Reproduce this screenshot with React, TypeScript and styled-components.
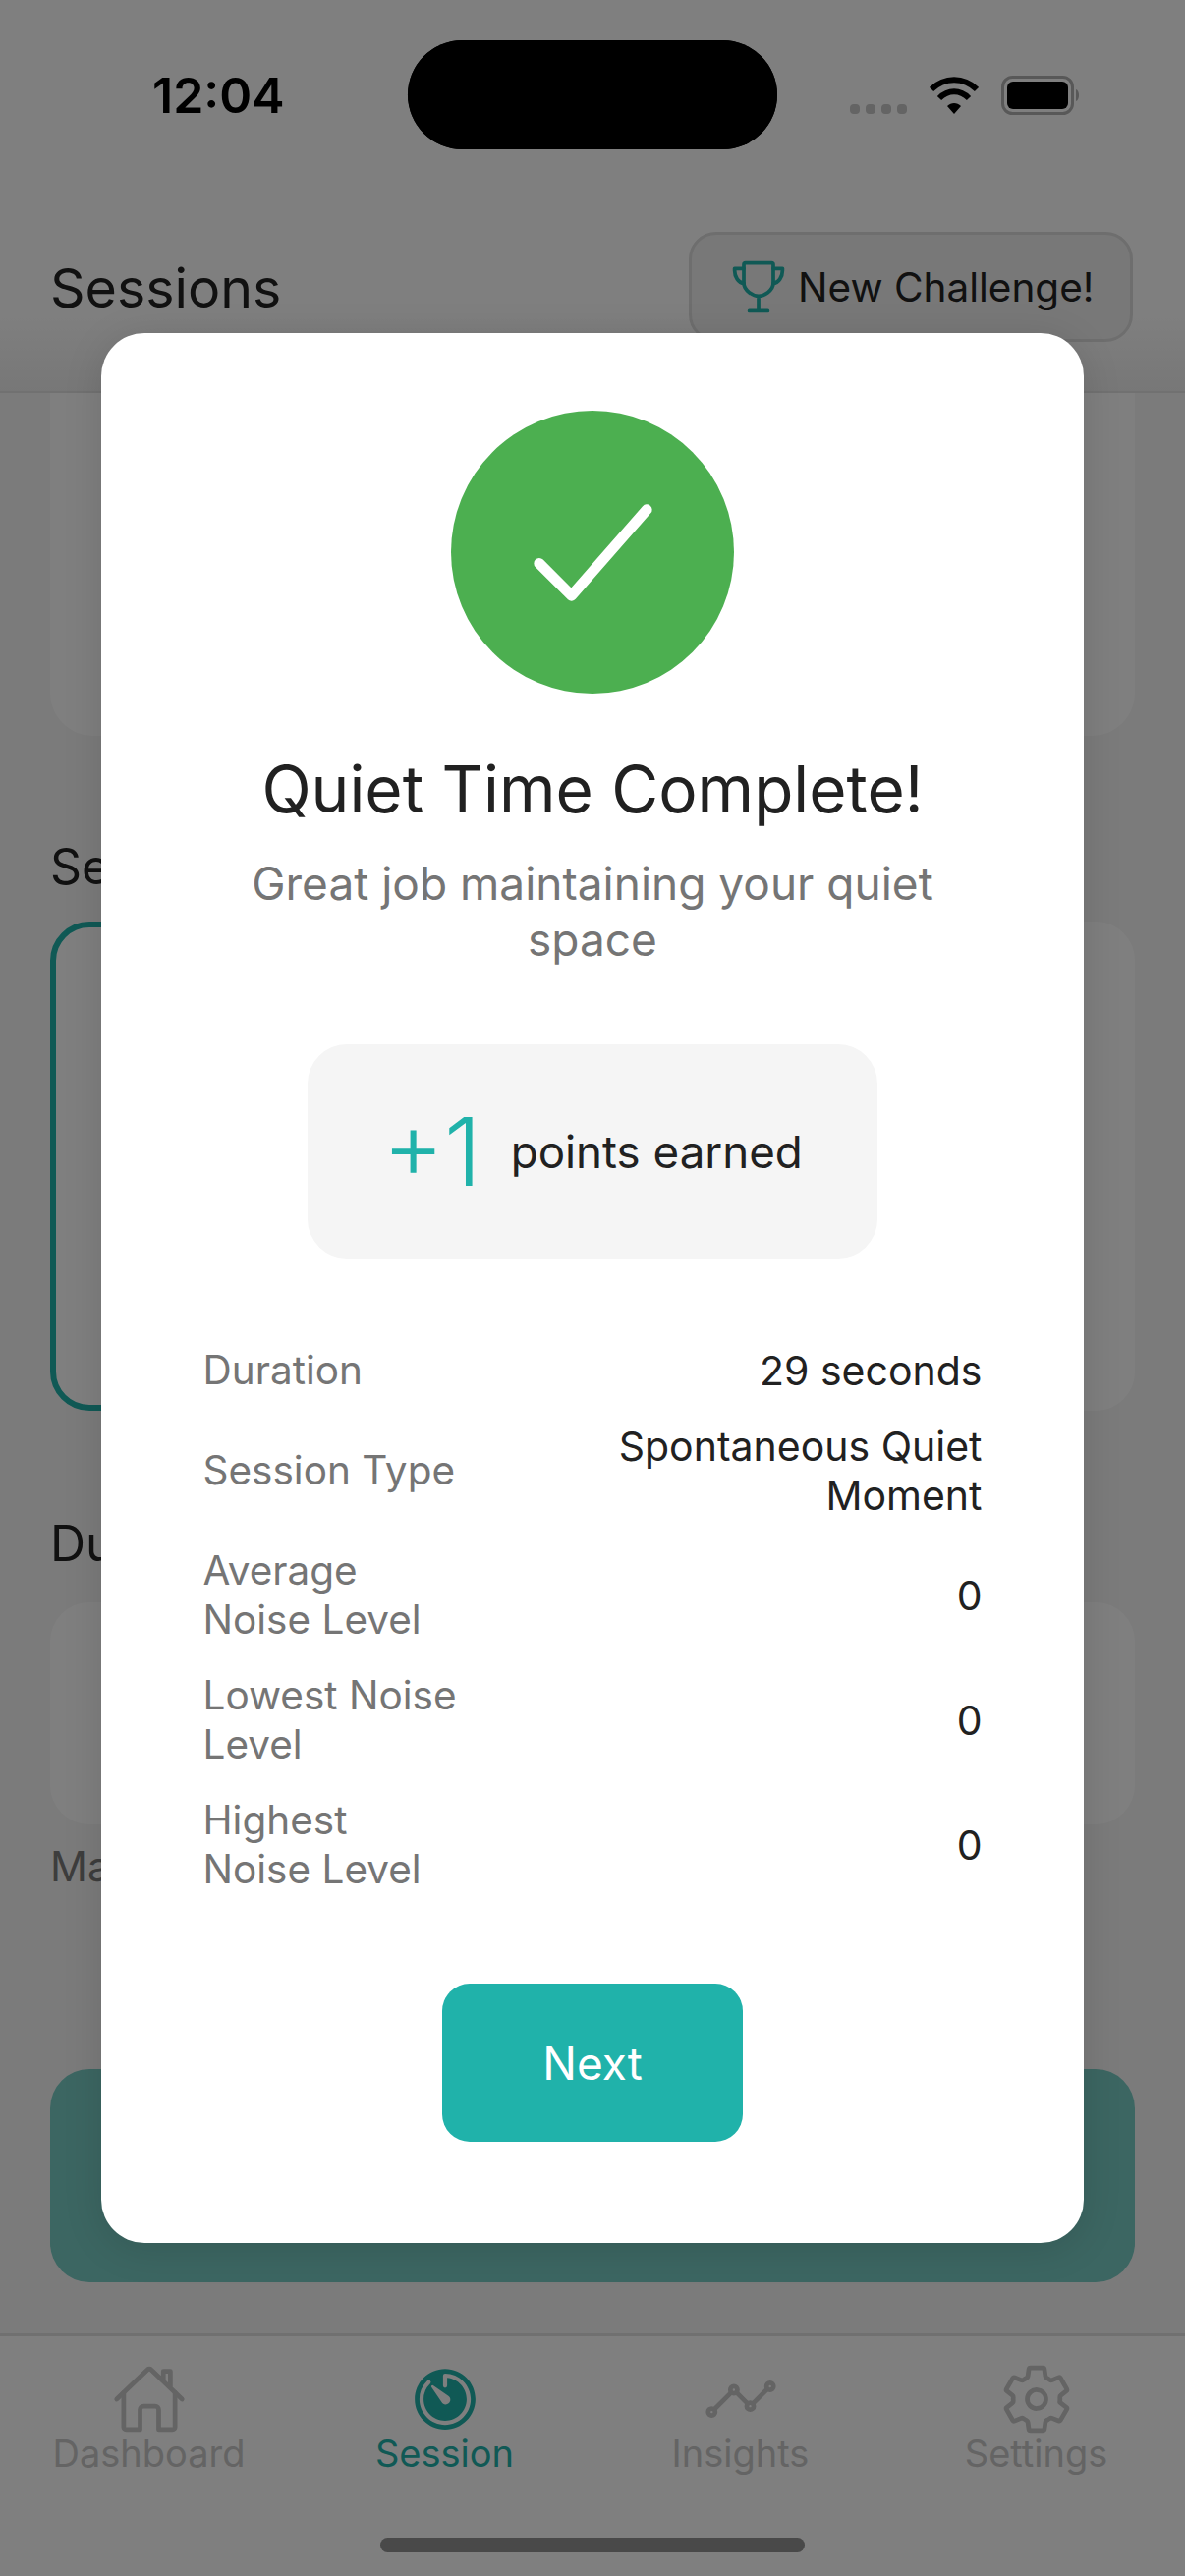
import styled, { createGlobalStyle } from "styled-components";
import {
  IoAnalyticsOutline,
  IoCheckmark,
  IoHomeOutline,
  IoSettingsOutline,
  IoTimer,
  IoTrophyOutline,
} from "react-icons/io5";

const GlobalStyle = createGlobalStyle`
  html, body {
    margin: 0;
    padding: 0;
    background: #fff;
    font-family: Inter, "Liberation Sans", sans-serif;
  }
  * { box-sizing: border-box; }
`;

const Screen = styled.div`
  position: relative;
  width: 1206px;
  height: 2622px;
  display: flex;
  flex-direction: column;
  overflow: hidden;
  background: #f7f7f7;
`;

const StatusBar = styled.div`
  height: 200px;
  padding-top: 41px;
  display: grid;
  grid-template-columns: 415px 376px 1fr;
  align-items: flex-start;
  background: #fff;
`;

const Clock = styled.div`
  height: 111px;
  padding-left: 155px;
  display: flex;
  align-items: center;
  font-size: 50px;
  font-weight: 600;
  color: #000;
`;

const Island = styled.div`
  height: 111px;
  border-radius: 56px;
  background: #000;
`;

const StatusIcons = styled.div`
  height: 111px;
  padding-left: 74px;
  display: flex;
  align-items: center;
  gap: 23px;
`;

const Header = styled.header`
  height: 200px;
  padding: 0 53px 14px 51px;
  display: flex;
  align-items: center;
  justify-content: space-between;
  background: linear-gradient(#fff 60%, #efefef);
  border-bottom: 2px solid #e2e2e2;
`;

const HeaderTitle = styled.h1`
  margin: 0;
  font-size: 55.5px;
  font-weight: 400;
  color: #222;
`;

const ChallengeButton = styled.div`
  width: 452px;
  height: 112px;
  padding-left: 38px;
  display: flex;
  align-items: center;
  gap: 10px;
  font-size: 40.5px;
  color: #222;
  background: #f0f0f0;
  border: 3px solid #dcdcdc;
  border-radius: 28px;

  svg { color: #20b2aa; flex: none; }
`;

const Content = styled.main`
  flex: 1;
  min-height: 0;
  padding: 0 51px;
  display: flex;
  flex-direction: column;
`;

const TopCard = styled.div`
  height: 349px;
  background: #fff;
  border-radius: 0 0 44px 44px;
`;

const SectionLabel = styled.div`
  margin: 101px 0 24px 0;
  font-size: 50px;
  line-height: 64px;
  color: #222;
`;

const TypeGrid = styled.div`
  margin-bottom: 2px;
  display: grid;
  grid-template-columns: 1fr 1fr;
  gap: 20px;
`;

const TypeCard = styled.div<{ $active?: boolean }>`
  height: 498px;
  background: #fff;
  border: 6px solid ${(p) => (p.$active ? "#20b2aa" : "#fff")};
  border-radius: 40px;
`;

const DurationCard = styled.div`
  height: 226px;
  margin-top: 4px;
  background: #fff;
  border-radius: 40px;
`;

const HintText = styled.div`
  margin-top: 17px;
  font-size: 42px;
  line-height: 52px;
  color: #7a7a7a;
`;

const StartButton = styled.div`
  height: 217px;
  margin-top: 180px;
  background: #78ccc4;
  border-radius: 40px;
`;

const TabBar = styled.nav`
  height: 247px;
  padding-top: 26px;
  display: grid;
  grid-template-columns: repeat(4, 301px);
  justify-content: center;
  background: #fff;
  border-top: 3px solid #e0e0e0;
`;

const TabItem = styled.div<{ $active?: boolean }>`
  height: 116px;
  display: flex;
  flex-direction: column;
  align-items: center;
  color: ${(p) => (p.$active ? "#20b2aa" : "#c8c8c8")};
  font-size: 38px;
  line-height: 46px;

  svg { flex: none; margin-bottom: -6px; }
`;

const HomeBar = styled.div`
  position: absolute;
  left: 387px;
  bottom: 24px;
  width: 432px;
  height: 15px;
  border-radius: 8px;
  background: #929292;
  z-index: 1;
`;

const Overlay = styled.div`
  position: absolute;
  inset: 0;
  z-index: 2;
  background: rgba(0, 0, 0, 0.5);
`;

const IslandTop = styled(Island)`
  position: absolute;
  left: 415px;
  top: 41px;
  width: 376px;
  z-index: 3;
`;

const Modal = styled.section`
  position: absolute;
  left: 103px;
  top: 339px;
  width: 1000px;
  height: 1944px;
  padding: 79px 104px 0 104px;
  display: flex;
  flex-direction: column;
  align-items: center;
  background: #fff;
  border-radius: 44px;
  box-shadow: 0 6px 40px rgba(0, 0, 0, 0.12);
  z-index: 4;
`;

const SuccessCircle = styled.div`
  width: 288px;
  height: 288px;
  border-radius: 50%;
  background: #4caf50;
  display: flex;
  align-items: center;
  justify-content: center;
  color: #fff;
`;

const ModalTitle = styled.h2`
  margin: 55px 0 0 0;
  font-size: 65.7px;
  line-height: 84px;
  font-weight: 400;
  color: #212121;
  white-space: nowrap;
`;

const ModalSubtitle = styled.p`
  margin: 26px 0 0 0;
  width: 760px;
  font-size: 46px;
  line-height: 57px;
  text-align: center;
  color: #757575;
`;

const PointsBox = styled.div`
  width: 580px;
  height: 218px;
  margin-top: 78px;
  display: flex;
  align-items: center;
  justify-content: center;
  gap: 30px;
  background: #f5f5f5;
  border-radius: 40px;
`;

const PointsValue = styled.span`
  font-size: 96px;
  font-weight: 300;
  color: #20b2aa;
`;

const PointsLabel = styled.span`
  font-size: 45.7px;
  color: #212121;
`;

const StatList = styled.div`
  width: 793px;
  margin-top: 89px;
  display: flex;
  flex-direction: column;
  gap: 27px;
`;

const StatRow = styled.div`
  display: flex;
  align-items: center;
  justify-content: space-between;
  line-height: 50px;
`;

const StatLabel = styled.span`
  width: 262px;
  font-size: 40.5px;
  color: #757575;
`;

const StatValue = styled.span`
  width: 400px;
  font-size: 41px;
  text-align: right;
  color: #212121;
`;

const NextButton = styled.button`
  width: 306px;
  height: 161px;
  margin-top: 91px;
  border: 0;
  border-radius: 28px;
  background: #20b2aa;
  color: #fff;
  font-family: inherit;
  font-size: 46px;
`;

const stats = [
  { label: "Duration", value: "29 seconds" },
  { label: "Session Type", value: "Spontaneous Quiet Moment" },
  { label: "Average Noise Level", value: "0" },
  { label: "Lowest Noise Level", value: "0" },
  { label: "Highest Noise Level", value: "0" },
];

const tabs = [
  { label: "Dashboard", Icon: IoHomeOutline },
  { label: "Session", Icon: IoTimer, active: true },
  { label: "Insights", Icon: IoAnalyticsOutline },
  { label: "Settings", Icon: IoSettingsOutline },
];

function SignalDots() {
  return (
    <svg width="58" height="10" viewBox="0 0 58 10" style={{ marginTop: 29 }}>
      {[0, 16, 32, 48].map((x) => (
        <rect key={x} x={x} width="10" height="10" rx="4" fill="#c8c8c8" />
      ))}
    </svg>
  );
}

function Wifi() {
  return (
    <svg width="50" height="38" viewBox="0 0 50 38" fill="none" stroke="#000" strokeWidth="6">
      <path d="M2 13 C15 0 35 0 48 13" />
      <path d="M10 22 C19 13 31 13 40 22" />
      <path d="M18 30 C22 26 28 26 32 30 L25 38 Z" fill="#000" stroke="none" />
    </svg>
  );
}

function Battery() {
  return (
    <svg width="82" height="40" viewBox="0 0 82 40" fill="none">
      <rect x="1.5" y="1.5" width="71" height="37" rx="10" stroke="#b0b0b0" strokeWidth="3" />
      <rect x="6" y="6" width="62" height="28" rx="6" fill="#000" />
      <path d="M76 14 C80 15 80 25 76 26 Z" fill="#b0b0b0" />
    </svg>
  );
}

export default function App() {
  return (
    <>
      <GlobalStyle />
      <Screen>
        <StatusBar>
          <Clock>12:04</Clock>
          <Island />
          <StatusIcons>
            <SignalDots />
            <Wifi />
            <Battery />
          </StatusIcons>
        </StatusBar>

        <Header>
          <HeaderTitle>Sessions</HeaderTitle>
          <ChallengeButton>
            <IoTrophyOutline size={60} />
            New Challenge!
          </ChallengeButton>
        </Header>

        <Content>
          <TopCard />
          <SectionLabel>Se</SectionLabel>
          <TypeGrid>
            <TypeCard $active />
            <TypeCard />
          </TypeGrid>
          <SectionLabel>Du</SectionLabel>
          <DurationCard />
          <HintText>Ma</HintText>
          <StartButton />
        </Content>

        <TabBar>
          {tabs.map(({ label, Icon, active }) => (
            <TabItem key={label} $active={active}>
              <Icon size={76} />
              {label}
            </TabItem>
          ))}
        </TabBar>
        <HomeBar />

        <Overlay />
        <IslandTop />

        <Modal>
          <SuccessCircle>
            <IoCheckmark size={175} />
          </SuccessCircle>
          <ModalTitle>Quiet Time Complete!</ModalTitle>
          <ModalSubtitle>Great job maintaining your quiet space</ModalSubtitle>
          <PointsBox>
            <PointsValue>+1</PointsValue>
            <PointsLabel>points earned</PointsLabel>
          </PointsBox>
          <StatList>
            {stats.map((s) => (
              <StatRow key={s.label}>
                <StatLabel>{s.label}</StatLabel>
                <StatValue>{s.value}</StatValue>
              </StatRow>
            ))}
          </StatList>
          <NextButton>Next</NextButton>
        </Modal>
      </Screen>
    </>
  );
}
